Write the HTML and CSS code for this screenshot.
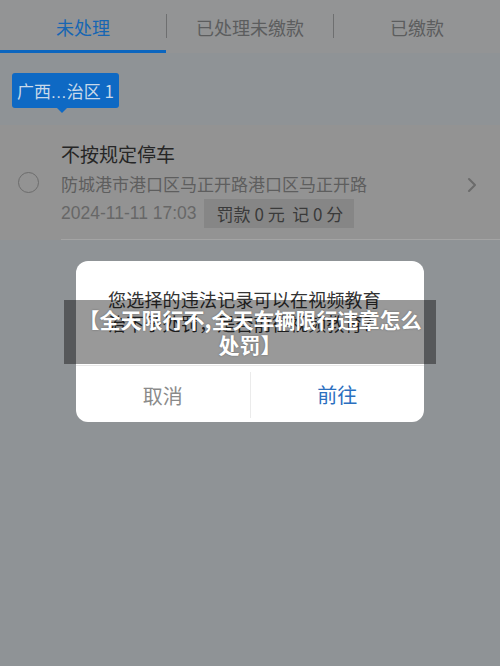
FILE: index.html
```html
<!DOCTYPE html>
<html lang="zh-CN">
<head>
<meta charset="utf-8">
<title>违章记录</title>
<link rel="stylesheet" href="styles.css">
</head>
<body>
<div class="page">
  <nav class="tabs">
    <div class="tab active">未处理</div>
    <span class="sep"></span>
    <div class="tab">已处理未缴款</div>
    <span class="sep"></span>
    <div class="tab">已缴款</div>
  </nav>

  <div class="filter">
    <span class="badge">广西<span class="dots">...</span>治区 1</span>
  </div>

  <div class="card">
    <div class="radio"><span class="circle"></span></div>
    <div class="body">
      <div class="info">
        <div class="title">不按规定停车</div>
        <div class="addr">防城港市港口区马正开路港口区马正开路</div>
        <div class="meta">
          <span class="date">2024-11-11 17:03</span>
          <span class="tag">罚款 0 元&nbsp;&nbsp;记 0 分</span>
        </div>
      </div>
      <div class="chev">
        <svg width="12" height="16" viewBox="0 0 12 16"><path d="M3 2 L9 8 L3 14" fill="none" stroke="#6b6b6b" stroke-width="2" stroke-linecap="round" stroke-linejoin="round"/></svg>
      </div>
    </div>
  </div>

  <div class="dialog">
    <div class="dialog-text">您选择的违法记录可以在视频教育治下予处罚，是否前往视频教育？</div>
    <div class="dialog-actions">
      <div class="btn cancel">取消</div>
      <div class="btn ok">前往</div>
    </div>
  </div>

  <div class="banner">【全天限行不,全天车辆限行违章怎么处罚】</div>
</div>
</body>
</html>
```

FILE: styles.css
```css
* { box-sizing: border-box; }
html, body {
  margin: 0;
  padding: 0;
}
body {
  background: #8f9396;
  font-family: "Noto Sans CJK SC", "Noto Sans", sans-serif;
  width: 500px;
  height: 666px;
  overflow: hidden;
}
.page {
  position: relative;
  width: 500px;
  height: 666px;
}
.tabs {
  display: flex;
  align-items: stretch;
  height: 53px;
  background: #939495;
}
.tab {
  flex: 1;
  display: flex;
  align-items: center;
  justify-content: center;
  font-size: 18px;
  color: #5c5d5e;
  border-bottom: 3px solid transparent;
  padding-top: 3px;
}
.tab.active {
  color: #1766b3;
  border-bottom-color: #0c66bf;
}
.sep {
  width: 1px;
  height: 24px;
  align-self: center;
  margin-top: -2px;
  background: #6e6f70;
}
.filter {
  padding: 20px 12px 0;
  height: 72px;
}
.badge {
  position: relative;
  display: inline-block;
  height: 35px;
  line-height: 35px;
  padding: 0 5px;
  background: #0e69c4;
  color: #c9d9ea;
  font-size: 17px;
  border-radius: 3px;
}
.dots {
  font-family: "Liberation Sans", "Noto Sans", sans-serif;
  letter-spacing: 0.5px;
}
.badge::after {
  content: "";
  position: absolute;
  left: 45px;
  bottom: -5px;
  border-left: 5px solid transparent;
  border-right: 5px solid transparent;
  border-top: 5px solid #0e69c4;
}
.card {
  display: flex;
  background: #939393;
}
.radio {
  width: 61px;
  display: flex;
  align-items: center;
  justify-content: center;
  padding-right: 4px;
}
.circle {
  width: 21px;
  height: 21px;
  border: 1.5px solid #6c6c6c;
  border-radius: 50%;
}
.body {
  flex: 1;
  display: flex;
  border-bottom: 1px solid #a4a4a4;
  padding: 14px 0 11px;
}
.info {
  flex: 1;
}
.title {
  font-size: 19px;
  line-height: 30px;
  color: #262626;
}
.addr {
  font-size: 17px;
  line-height: 30px;
  color: #5e5e5e;
  white-space: nowrap;
}
.meta {
  display: flex;
  align-items: center;
  gap: 7px;
  height: 29px;
}
.date {
  font-family: "Liberation Sans", "Noto Sans CJK SC", sans-serif;
  font-size: 17.5px;
  color: #676767;
}
.tag {
  height: 29px;
  line-height: 29px;
  padding: 0 11px 0 13px;
  background: #868686;
  color: #3a3a3a;
  font-size: 17px;
}
.chev {
  width: 34px;
  display: flex;
  align-items: center;
  justify-content: flex-start;
  padding-top: 2px;
}
.dialog {
  position: absolute;
  left: 76px;
  top: 261px;
  width: 348px;
  background: #fff;
  border-radius: 12px;
  overflow: hidden;
}
.dialog-text {
  padding: 26px 32px 30px;
  font-size: 18px;
  line-height: 24px;
  color: #333;
  letter-spacing: 0.2px;
}
.dialog-actions {
  display: flex;
  height: 57px;
  border-top: 1px solid #e8e8e8;
}
.btn {
  flex: 1;
  display: flex;
  align-items: center;
  justify-content: center;
  font-size: 20px;
}
.btn.cancel {
  color: #8a8a8a;
  border-right: 1px solid #ebebeb;
  margin: 6px 0 4px;
}
.btn.ok {
  color: #2b6fbf;
}
.banner {
  position: absolute;
  left: 64px;
  top: 300px;
  width: 372px;
  height: 64px;
  padding: 7px 8px 0;
  background: rgba(0, 0, 0, 0.4);
  color: #fff;
  font-size: 21px;
  font-weight: bold;
  line-height: 25px;
  text-align: center;
  text-shadow: 0 0 2px rgba(0,0,0,0.35);
}
```
